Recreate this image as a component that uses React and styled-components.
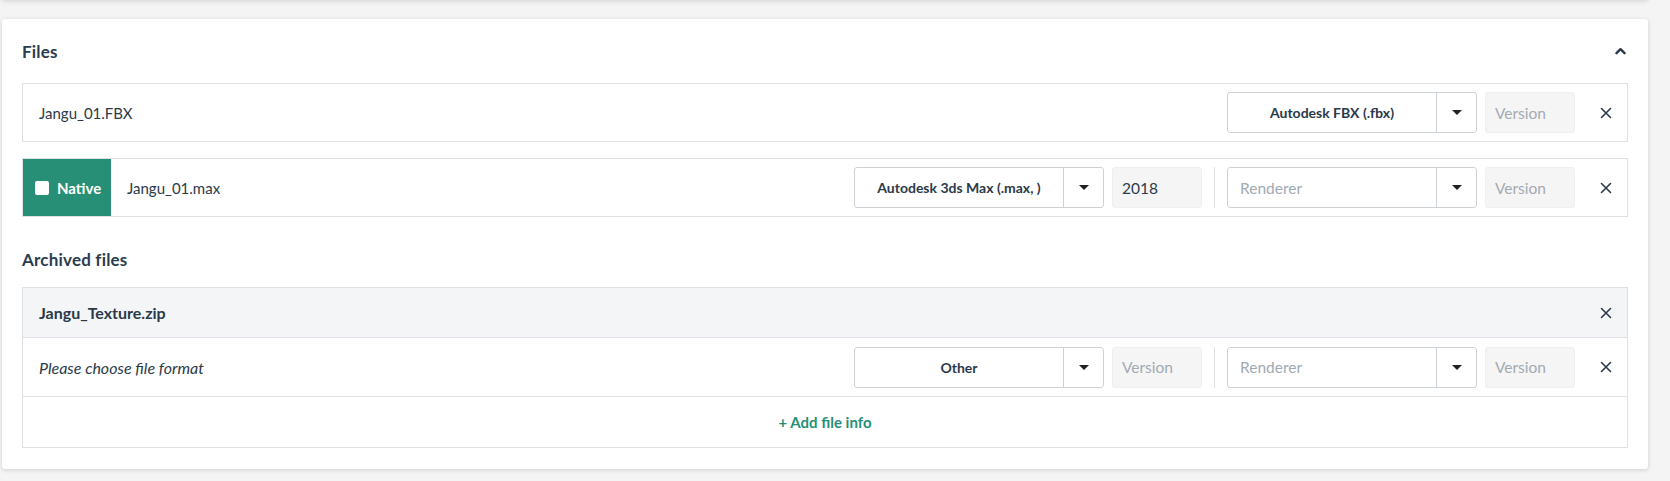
import React from "react";
import styled, { createGlobalStyle } from "styled-components";

const GlobalStyle = createGlobalStyle`
  *, *::before, *::after { box-sizing: border-box; }
  html, body { margin: 0; padding: 0; background: #f4f4f4; }
  body { font-family: Lato, "Noto Sans", sans-serif; color: #2b3a4a; }
`;

const Page = styled.div`
  padding: 0 22px 12px 2px;
  overflow: hidden;
`;

const PrevCard = styled.div`
  height: 20px;
  margin-top: -20px;
  background: #fff;
  box-shadow: 0 1px 5px rgba(0, 0, 0, 0.14);
`;

const Card = styled.section`
  margin-top: 19px;
  background: #fff;
  border-radius: 3px;
  box-shadow: 0 1px 4px rgba(0, 0, 0, 0.16);
  padding: 20px 20px 21px 20px;
`;

const SectionHeader = styled.div`
  display: flex;
  align-items: center;
  justify-content: space-between;
  height: 24px;
  margin-bottom: ${(p) => p.$mb || 20}px;
  margin-top: ${(p) => p.$mt || 0}px;
`;

const Title = styled.h2`
  margin: 0;
  font-size: 17px;
  font-weight: 700;
  color: #2b3c4e;
  letter-spacing: 0.2px;
`;

const Collapse = styled.button`
  border: 0;
  background: none;
  padding: 0;
  margin-right: 1px;
  width: 14px;
  height: 14px;
  display: flex;
  align-items: center;
  justify-content: center;
  color: #2b3a4a;
`;

const FileRow = styled.div`
  display: flex;
  align-items: stretch;
  height: 59px;
  border: 1px solid #dde1e5;
  background: #fff;
  & + & {
    margin-top: 16px;
  }
`;

const NativeCell = styled.label`
  display: flex;
  align-items: center;
  gap: 8px;
  width: 88px;
  padding-left: 12px;
  background: #268f76;
  color: #fff;
  font-size: 15px;
  font-weight: 700;
`;

const CheckBox = styled.span`
  width: 14px;
  height: 14px;
  border-radius: 2px;
  background: #fff;
  flex-shrink: 0;
`;

const FileName = styled.div`
  flex: 1;
  display: flex;
  align-items: center;
  padding-left: 16px;
  font-size: ${(p) => (p.$bold || p.$italic ? 16 : 15)}px;
  font-weight: ${(p) => (p.$bold ? 700 : 400)};
  font-style: ${(p) => (p.$italic ? "italic" : "normal")};
  color: #2b3a4a;
`;

const Controls = styled.div`
  display: flex;
  align-items: center;
`;

const Select = styled.div`
  display: flex;
  width: 250px;
  height: 41px;
  border: 1px solid #cdd2d7;
  border-radius: 3px;
  background: #fff;
  margin-right: 8px;
`;

const SelectValue = styled.div`
  flex: 1;
  display: flex;
  align-items: center;
  justify-content: ${(p) => (p.$placeholder ? "flex-start" : "center")};
  padding: 0 12px;
  font-size: ${(p) => (p.$placeholder ? 15.5 : 14)}px;
  font-weight: ${(p) => (p.$placeholder ? 400 : 700)};
  color: ${(p) => (p.$placeholder ? "#a2aab2" : "#2b3a4a")};
  white-space: nowrap;
`;

const SelectArrow = styled.div`
  width: 40px;
  border-left: 1px solid #cdd2d7;
  display: flex;
  align-items: center;
  justify-content: center;
`;

const Caret = styled.span`
  width: 0;
  height: 0;
  border-left: 5px solid transparent;
  border-right: 5px solid transparent;
  border-top: 5px solid #222;
`;

const VersionBox = styled.div`
  width: 90px;
  height: 41px;
  border: 1px solid #efefef;
  border-radius: 3px;
  background: #f5f5f5;
  display: flex;
  align-items: center;
  padding: 0 9px;
  font-size: 15.5px;
  color: ${(p) => (p.$filled ? "#2b3a4a" : "#a2aab2")};
`;

const Separator = styled.div`
  width: 1px;
  height: 41px;
  background: #dde1e5;
  margin: 0 12px;
`;

const RemoveButton = styled.button`
  width: 42px;
  margin-left: 10px;
  align-self: stretch;
  border: 0;
  background: none;
  padding: 0;
  display: flex;
  align-items: center;
  justify-content: center;
  color: #2b3a4a;
  cursor: pointer;
`;

const ArchiveBox = styled.div`
  border: 1px solid #dde1e5;
  background: #fff;
`;

const ArchiveHeader = styled.div`
  display: flex;
  height: 50px;
  background: #f4f5f7;
  border-bottom: 1px solid #dde1e5;
`;

const ArchiveRow = styled.div`
  display: flex;
  height: 59px;
  border-bottom: 1px solid #dde1e5;
`;

const AddRow = styled.div`
  height: 50px;
  display: flex;
  align-items: center;
  justify-content: center;
`;

const AddLink = styled.button`
  border: 0;
  background: none;
  font-family: inherit;
  font-size: 15px;
  font-weight: 700;
  color: #268f76;
  cursor: pointer;
  padding: 0;
`;

const CloseIcon = () => (
  <svg width="12" height="12" viewBox="0 0 12 12" fill="none">
    <path d="M1.5 1.5L10.5 10.5M10.5 1.5L1.5 10.5" stroke="currentColor" strokeWidth="1.6" strokeLinecap="round" />
  </svg>
);

const ChevronUp = () => (
  <svg width="11" height="8" viewBox="0 0 11 8" fill="none">
    <path d="M1.5 6.2L5.5 2.2L9.5 6.2" stroke="currentColor" strokeWidth="2.4" strokeLinecap="round" strokeLinejoin="round" />
  </svg>
);

const FormatSelect = ({ value, placeholder }) => (
  <Select>
    <SelectValue $placeholder={!value}>{value || placeholder}</SelectValue>
    <SelectArrow>
      <Caret />
    </SelectArrow>
  </Select>
);

const Remove = () => (
  <RemoveButton aria-label="Remove">
    <CloseIcon />
  </RemoveButton>
);

export default function App() {
  return (
    <>
      <GlobalStyle />
      <Page>
        <PrevCard />
        <Card>
          <SectionHeader>
            <Title>Files</Title>
            <Collapse aria-label="Collapse">
              <ChevronUp />
            </Collapse>
          </SectionHeader>

          <FileRow>
            <FileName>Jangu_01.FBX</FileName>
            <Controls>
              <FormatSelect value="Autodesk FBX (.fbx)" />
              <VersionBox>Version</VersionBox>
              <Remove />
            </Controls>
          </FileRow>

          <FileRow>
            <NativeCell>
              <CheckBox />
              Native
            </NativeCell>
            <FileName>Jangu_01.max</FileName>
            <Controls>
              <FormatSelect value="Autodesk 3ds Max (.max, )" />
              <VersionBox $filled>2018</VersionBox>
              <Separator />
              <FormatSelect placeholder="Renderer" />
              <VersionBox>Version</VersionBox>
              <Remove />
            </Controls>
          </FileRow>

          <SectionHeader $mt={30} $mb={16}>
            <Title>Archived files</Title>
          </SectionHeader>

          <ArchiveBox>
            <ArchiveHeader>
              <FileName $bold>Jangu_Texture.zip</FileName>
              <Remove />
            </ArchiveHeader>
            <ArchiveRow>
              <FileName $italic>Please choose file format</FileName>
              <Controls>
                <FormatSelect value="Other" />
                <VersionBox>Version</VersionBox>
                <Separator />
                <FormatSelect placeholder="Renderer" />
                <VersionBox>Version</VersionBox>
                <Remove />
              </Controls>
            </ArchiveRow>
            <AddRow>
              <AddLink>+ Add file info</AddLink>
            </AddRow>
          </ArchiveBox>
        </Card>
      </Page>
    </>
  );
}
